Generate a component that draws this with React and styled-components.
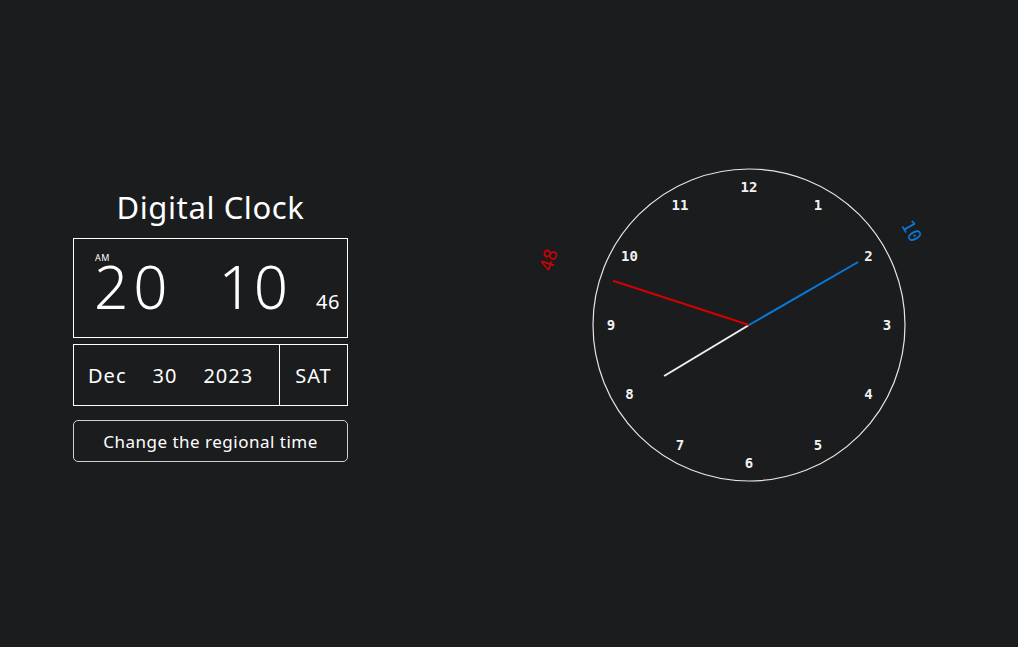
import React from 'react';
import styled, { createGlobalStyle } from 'styled-components';

const GlobalStyle = createGlobalStyle`
  html, body {
    margin: 0;
    padding: 0;
    background: #1b1c1e;
  }
  body {
    font-family: "Noto Sans", "Open Sans", sans-serif;
    color: #fff;
  }
`;

const Page = styled.div`
  width: 100vw;
  height: 100vh;
  display: flex;
  align-items: center;
  padding-left: 73px;
  box-sizing: border-box;
`;

const Panel = styled.div`
  width: 275px;
  display: flex;
  flex-direction: column;
  margin-top: 2px;
`;

const Title = styled.h1`
  margin: 0 0 11px;
  font-size: 31px;
  font-weight: 400;
  line-height: 40px;
  text-align: center;
  letter-spacing: 0.6px;
`;

const TimeBox = styled.div`
  height: 100px;
  box-sizing: border-box;
  border: 1px solid #fff;
  display: flex;
  align-items: baseline;
  padding: 15px 7px 0 20px;
`;

const Hours = styled.span`
  position: relative;
  font-size: 60px;
  line-height: 64px;
  font-weight: 300;
  letter-spacing: 5px;
`;

const Meridiem = styled.span`
  position: absolute;
  left: 1px;
  top: -1px;
  font-size: 9px;
  line-height: 10px;
  font-weight: 400;
  letter-spacing: 0.5px;
`;

const Minutes = styled.span`
  font-size: 60px;
  line-height: 64px;
  font-weight: 300;
  letter-spacing: 1px;
  margin-left: 46px;
`;

const Seconds = styled.span`
  font-size: 20px;
  letter-spacing: 0.5px;
  margin-left: auto;
`;

const DateBox = styled.div`
  margin-top: 6px;
  height: 62px;
  box-sizing: border-box;
  border: 1px solid #fff;
  display: flex;
`;

const DateCell = styled.div`
  flex: 1;
  display: flex;
  align-items: center;
  gap: 26px;
  padding-left: 14px;
  font-size: 20px;
  letter-spacing: 1px;
`;

const DayCell = styled.div`
  width: 67px;
  border-left: 1px solid #fff;
  display: flex;
  align-items: center;
  justify-content: center;
  font-size: 20px;
  letter-spacing: 1px;
`;

const Button = styled.button`
  margin-top: 14px;
  height: 42px;
  border: 1px solid #cfcfcf;
  border-radius: 5px;
  background: transparent;
  color: #fff;
  font-family: "Noto Sans", "Open Sans", sans-serif;
  font-size: 17px;
  letter-spacing: 0.5px;
  cursor: pointer;
`;

const ClockArea = styled.div`
  margin-left: 181px;
  width: 440px;
  height: 440px;
  margin-top: 2px;
`;

const Face = styled.svg`
  display: block;
  font-family: "DejaVu Sans Mono", "Liberation Mono", monospace;
`;

const C = 220;
const R = 156;

function polar(angle, radius) {
  const rad = (angle * Math.PI) / 180;
  return [C + radius * Math.sin(rad), C - radius * Math.cos(rad)];
}

function Hand({ angle, length, color }) {
  const [x, y] = polar(angle, length);
  return <line x1={C} y1={C} x2={x} y2={y} stroke={color} strokeWidth="2" />;
}

function HandLabel({ angle, radius, color, children }) {
  const [x, y] = polar(angle, radius);
  return (
    <text
      x={x}
      y={y}
      fill={color}
      fontSize="18"
      textAnchor="middle"
      dominantBaseline="central"
      transform={`rotate(${angle} ${x} ${y})`}
    >
      {children}
    </text>
  );
}

function AnalogClock() {
  const hours = [12, 1, 2, 3, 4, 5, 6, 7, 8, 9, 10, 11];
  return (
    <ClockArea>
      <Face width="440" height="440" viewBox="0 0 440 440">
        <circle cx={C} cy={C} r={R} fill="none" stroke="#e6e6e6" strokeWidth="1.2" />
        {hours.map((h, i) => {
          const [x, y] = polar(i * 30, 138);
          return (
            <text
              key={h}
              x={x}
              y={y}
              fill="#f2f2f2"
              fontSize="14"
              fontWeight="bold"
              textAnchor="middle"
              dominantBaseline="central"
            >
              {h}
            </text>
          );
        })}
        <Hand angle={239} length={99} color="#f2f2f2" />
        <Hand angle={60} length={126} color="#0a78d7" />
        <Hand angle={288} length={143} color="#d40000" />
        <HandLabel angle={60} radius={188} color="#0a78d7">10</HandLabel>
        <HandLabel angle={288} radius={211} color="#d40000">48</HandLabel>
      </Face>
    </ClockArea>
  );
}

export default function App() {
  return (
    <>
      <GlobalStyle />
      <Page>
        <Panel>
          <Title>Digital Clock</Title>
          <TimeBox>
            <Hours>
              <Meridiem>AM</Meridiem>
              20
            </Hours>
            <Minutes>10</Minutes>
            <Seconds>46</Seconds>
          </TimeBox>
          <DateBox>
            <DateCell>
              <span>Dec</span>
              <span>30</span>
              <span>2023</span>
            </DateCell>
            <DayCell>SAT</DayCell>
          </DateBox>
          <Button>Change the regional time</Button>
        </Panel>
        <AnalogClock />
      </Page>
    </>
  );
}
